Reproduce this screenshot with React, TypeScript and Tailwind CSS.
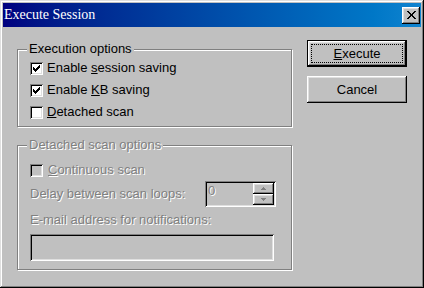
import React from "react";

const raised =
  "shadow-[inset_-1px_-1px_#000,inset_1px_1px_#fff,inset_-2px_-2px_#808080,inset_2px_2px_#dfdfdf]";
const sunken =
  "shadow-[inset_1px_1px_#808080,inset_-1px_-1px_#fff,inset_2px_2px_#000,inset_-2px_-2px_#dfdfdf]";
const dis = "text-[#808080] [text-shadow:1px_1px_0_#fff]";

function Check({ checked, disabled }: { checked?: boolean; disabled?: boolean }) {
  return (
    <div
      className={`w-[13px] h-[13px] shrink-0 flex items-center justify-center ${sunken} ${
        disabled ? "bg-[#c0c0c0]" : "bg-white"
      }`}
    >
      {checked && (
        <svg width="7" height="7" viewBox="0 0 7 7" shapeRendering="crispEdges">
          <path
            d="M6 0h1v1h-1zM5 1h2v1h-2zM4 2h3v1h-3zM0 2h1v1h-1zM0 3h2v1h-2zM3 3h3v1h-3zM0 4h5v1h-5zM1 5h3v1h-3zM2 6h1v1h-1z"
            fill="#000"
          />
        </svg>
      )}
    </div>
  );
}

function Group({
  label,
  disabled,
  className,
  children,
}: {
  label: string;
  disabled?: boolean;
  className?: string;
  children?: React.ReactNode;
}) {
  return (
    <div
      className={`relative border border-[#808080] shadow-[inset_1px_1px_#fff,1px_1px_#fff] ${className ?? ""}`}
    >
      <div
        className={`absolute -top-[9px] left-[9px] px-[2px] bg-[#c0c0c0] leading-[16px] ${
          disabled ? dis : "text-black"
        }`}
      >
        {label}
      </div>
      {children}
    </div>
  );
}

export default function App() {
  return (
    <div
      className="w-[424px] h-[288px] bg-[#c0c0c0] p-[3px] flex flex-col shadow-[inset_-1px_-1px_#000,inset_1px_1px_#dfdfdf,inset_-2px_-2px_#808080,inset_2px_2px_#fff] text-[13px] text-black"
      style={{ fontFamily: '"Liberation Sans", Arial, sans-serif' }}
    >
      <div className="h-[24px] shrink-0 flex items-center justify-between bg-gradient-to-r from-[#000080] to-[#1084d0] pl-[1px] pr-[1px]">
        <span
          className="text-white text-[14px] leading-none"
          style={{ fontFamily: '"Liberation Serif", "Times New Roman", serif' }}
        >
          Execute Session
        </span>
        <div className={`w-[18px] h-[17px] bg-[#c0c0c0] flex items-center justify-center ${raised}`}>
          <svg width="9" height="8" viewBox="0 0 9 8" shapeRendering="crispEdges">
            <path
              d="M0 0h2v1h-2zM7 0h2v1h-2zM1 1h2v1h-2zM6 1h2v1h-2zM2 2h2v1h-2zM5 2h2v1h-2zM3 3h3v1h-3zM3 4h3v1h-3zM2 5h2v1h-2zM5 5h2v1h-2zM1 6h2v1h-2zM6 6h2v1h-2zM0 7h2v1h-2zM7 7h2v1h-2z"
              fill="#000"
            />
          </svg>
        </div>
      </div>

      <div className="flex pl-[14px] gap-[15px]">
        <div className="w-[275px] pt-[22px] flex flex-col">
          <Group label="Execution options" className="h-[78px] pt-[7px] pl-[12px]">
            <div className="h-[22px] flex items-center gap-[4px]">
              <Check checked />
              <span>
                Enable <u>s</u>ession saving
              </span>
            </div>
            <div className="h-[22px] flex items-center gap-[4px]">
              <Check checked />
              <span>
                Enable <u>K</u>B saving
              </span>
            </div>
            <div className="h-[22px] flex items-center gap-[4px]">
              <Check />
              <span>
                <u>D</u>etached scan
              </span>
            </div>
          </Group>

          <Group label="Detached scan options" disabled className="mt-[18px] h-[125px] pt-[13px] pl-[12px]">
            <div className="h-[22px] flex items-center gap-[5px]">
              <Check disabled />
              <span className={dis}>
                <u>C</u>ontinuous scan
              </span>
            </div>
            <div className="h-[26px] flex items-center">
              <span className={`w-[175px] ${dis}`}>Delay between scan loops:</span>
              <div className={`w-[71px] h-[26px] flex bg-[#c0c0c0] p-[2px] ${sunken}`}>
                <span className={`flex-1 pl-[1px] leading-[16px] ${dis}`}>0</span>
                <div className="w-[21px] flex flex-col">
                  <div className={`h-[11px] flex items-center justify-center bg-[#c0c0c0] ${raised}`}>
                    <svg width="5" height="3" viewBox="0 0 5 3" shapeRendering="crispEdges">
                      <path d="M2 0h1v1h-1zM1 1h3v1h-3zM0 2h5v1h-5z" fill="#808080" />
                    </svg>
                  </div>
                  <div className={`h-[11px] flex items-center justify-center bg-[#c0c0c0] ${raised}`}>
                    <svg width="5" height="3" viewBox="0 0 5 3" shapeRendering="crispEdges">
                      <path d="M0 0h5v1h-5zM1 1h3v1h-3zM2 2h1v1h-1z" fill="#808080" />
                    </svg>
                  </div>
                </div>
              </div>
            </div>
            <div className={`mt-[5px] h-[16px] leading-[16px] ${dis}`}>E-mail address for notifications:</div>
            <div className={`mt-[6px] w-[244px] h-[27px] bg-[#c0c0c0] ${sunken}`} />
          </Group>
        </div>

        <div className="w-[100px] pt-[13px] flex flex-col gap-[9px]">
          <div className="h-[27px] border border-black bg-[#c0c0c0]">
            <div className={`h-full p-[3px] ${raised}`}>
              <div className="h-full border border-dotted border-black flex items-center justify-center">
                <span>
                  <u>E</u>xecute
                </span>
              </div>
            </div>
          </div>
          <div className={`h-[27px] bg-[#c0c0c0] flex items-center justify-center ${raised}`}>Cancel</div>
        </div>
      </div>
    </div>
  );
}
